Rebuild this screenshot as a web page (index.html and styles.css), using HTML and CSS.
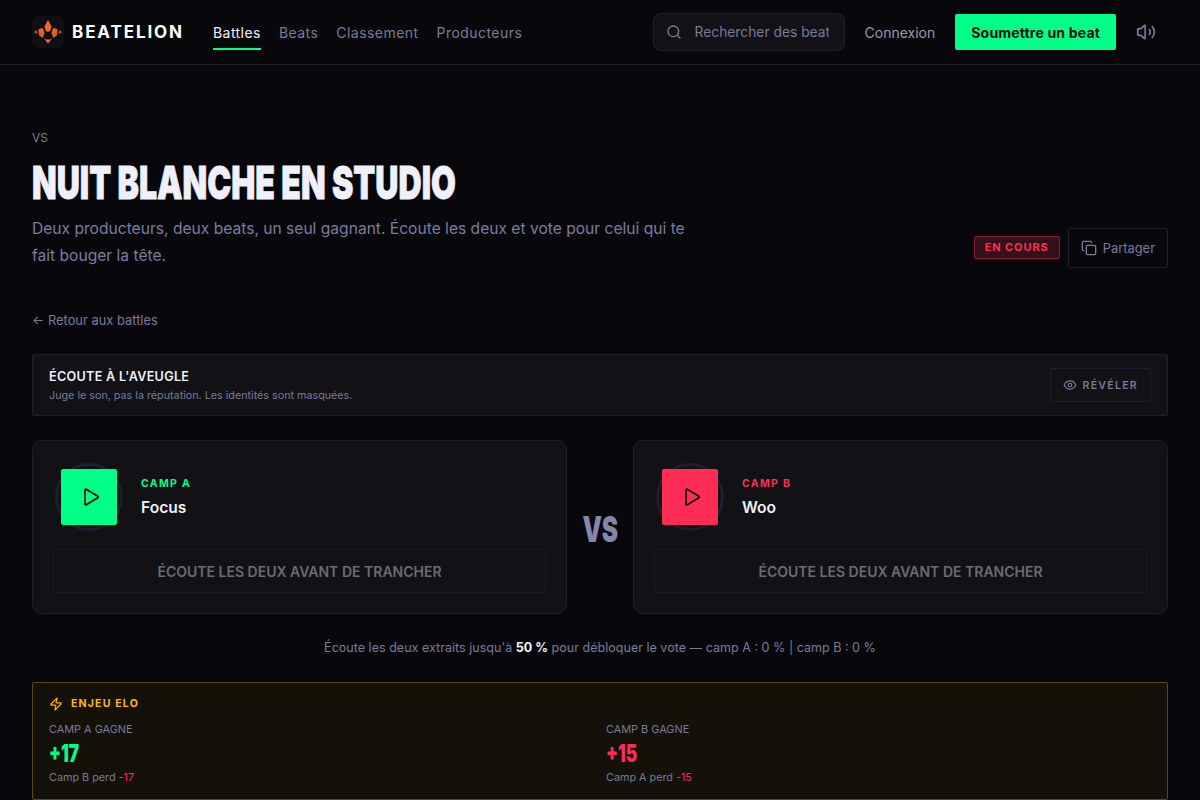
FILE: index.html

```html
<!DOCTYPE html>
<html lang="fr">
<head>
    <meta charset="UTF-8">
    <meta name="viewport" content="width=device-width, initial-scale=1.0">
    <title>Beatelion - Nuit blanche en studio</title>
    <link rel="stylesheet" href="styles.css">
</head>
<body>
    <header class="topbar">
        <div class="topbar-left">
            <a class="brand" href="#">
                <span class="brand-mark">
                    <svg width="32" height="32" viewBox="0 0 32 32">
                        <path d="M16 4l3.500 6.500-1.500 5h-4l-1.500-5z" fill="#f4672b"/>
                        <path d="M6.500 13l4.500-1 1.500 5.500-2 4.500-3.500-3z" fill="#e8602a"/>
                        <path d="M25.500 13l-4.500-1-1.500 5.500 2 4.500 3.500-3z" fill="#e8602a"/>
                        <path d="M12 22.500l2.500 1h3l2.500-1-4 5z" fill="#f4672b"/>
                        <circle cx="4" cy="16" r="1.800" fill="#a04a22"/>
                        <circle cx="28" cy="16" r="1.800" fill="#a04a22"/>
                    </svg>
                </span>
                <span class="brand-name">BEATELION</span>
            </a>
            <nav class="nav">
                <a class="nav-link active" href="#">Battles</a>
                <a class="nav-link" href="#">Beats</a>
                <a class="nav-link" href="#">Classement</a>
                <a class="nav-link" href="#">Producteurs</a>
            </nav>
        </div>
        <div class="topbar-right">
            <label class="search">
                <svg width="16" height="16" viewBox="0 0 24 24" fill="none" stroke="currentColor" stroke-width="2" stroke-linecap="round" stroke-linejoin="round"><circle cx="11" cy="11" r="8"/><path d="m21 21-4.300-4.300"/></svg>
                <input type="text" placeholder="Rechercher des beats...">
            </label>
            <a class="login" href="#">Connexion</a>
            <a class="submit" href="#">Soumettre un beat</a>
            <svg class="sound" width="20" height="20" viewBox="0 0 24 24" fill="none" stroke="currentColor" stroke-width="2" stroke-linecap="round" stroke-linejoin="round"><path d="M11 4.700a.7.7 0 0 0-1.200-.5L6.400 7.600A1.400 1.400 0 0 1 5.400 8H3a1 1 0 0 0-1 1v6a1 1 0 0 0 1 1h2.400a1.400 1.400 0 0 1 1 .4l3.400 3.400a.7.7 0 0 0 1.200-.5z"/><path d="M16 9a5 5 0 0 1 0 6"/><path d="M19.400 18.400a9 9 0 0 0 0-12.800"/></svg>
        </div>
    </header>

    <main class="page">
        <section class="hero">
            <div class="hero-text">
                <p class="eyebrow">VS</p>
                <h1 class="title">NUIT BLANCHE EN STUDIO</h1>
                <p class="lead">Deux producteurs, deux beats, un seul gagnant. Écoute les deux et vote pour celui qui te fait bouger la tête.</p>
            </div>
            <div class="hero-actions">
                <span class="status">EN COURS</span>
                <button class="share">
                    <svg width="16" height="16" viewBox="0 0 24 24" fill="none" stroke="currentColor" stroke-width="2" stroke-linecap="round" stroke-linejoin="round"><rect x="8" y="8" width="14" height="14" rx="2"/><path d="M4 16c-1.100 0-2-.9-2-2V4c0-1.100.9-2 2-2h10c1.100 0 2 .9 2 2"/></svg>
                    Partager
                </button>
            </div>
        </section>

        <a class="back" href="#">← Retour aux battles</a>

        <section class="blind">
            <div class="blind-text">
                <h2 class="blind-title">ÉCOUTE À L'AVEUGLE</h2>
                <p class="blind-sub">Juge le son, pas la réputation. Les identités sont masquées.</p>
            </div>
            <button class="reveal">
                <svg width="14" height="14" viewBox="0 0 24 24" fill="none" stroke="currentColor" stroke-width="2" stroke-linecap="round" stroke-linejoin="round"><path d="M2 12s3.600-7 10-7 10 7 10 7-3.600 7-10 7-10-7-10-7z"/><circle cx="12" cy="12" r="3"/></svg>
                RÉVÉLER
            </button>
        </section>

        <section class="duel">
            <article class="camp">
                <div class="camp-head">
                    <div class="player">
                        <span class="ring"></span>
                        <button class="play play-a">
                            <svg width="20" height="20" viewBox="0 0 24 24" fill="none" stroke="currentColor" stroke-width="2" stroke-linecap="round" stroke-linejoin="round"><path d="M6 3.500v17a1 1 0 0 0 1.500.8l14-8.500a1 1 0 0 0 0-1.600l-14-8.500A1 1 0 0 0 6 3.500z"/></svg>
                        </button>
                    </div>
                    <div>
                        <p class="camp-label label-a">CAMP A</p>
                        <p class="camp-name">Focus</p>
                    </div>
                </div>
                <div class="locked">ÉCOUTE LES DEUX AVANT DE TRANCHER</div>
            </article>

            <div class="versus"><span class="versus-text">VS</span></div>

            <article class="camp">
                <div class="camp-head">
                    <div class="player">
                        <span class="ring"></span>
                        <button class="play play-b">
                            <svg width="20" height="20" viewBox="0 0 24 24" fill="none" stroke="currentColor" stroke-width="2" stroke-linecap="round" stroke-linejoin="round"><path d="M6 3.500v17a1 1 0 0 0 1.500.8l14-8.500a1 1 0 0 0 0-1.600l-14-8.500A1 1 0 0 0 6 3.500z"/></svg>
                        </button>
                    </div>
                    <div>
                        <p class="camp-label label-b">CAMP B</p>
                        <p class="camp-name">Woo</p>
                    </div>
                </div>
                <div class="locked">ÉCOUTE LES DEUX AVANT DE TRANCHER</div>
            </article>
        </section>

        <p class="hint">Écoute les deux extraits jusqu'à <strong>50 %</strong> pour débloquer le vote — camp A : 0 % | camp B : 0 %</p>

        <section class="elo">
            <h3 class="elo-title">
                <svg width="14" height="14" viewBox="0 0 24 24" fill="none" stroke="currentColor" stroke-width="2" stroke-linecap="round" stroke-linejoin="round"><path d="M4 14a1 1 0 0 1-.8-1.600l9.900-10.200a.5.5 0 0 1 .9.500l-1.900 6A1 1 0 0 0 13 10h7a1 1 0 0 1 .8 1.600l-9.900 10.200a.5.5 0 0 1-.9-.5l1.900-6A1 1 0 0 0 11 14z"/></svg>
                ENJEU ELO
            </h3>
            <div class="elo-grid">
                <div>
                    <p class="elo-label">CAMP A GAGNE</p>
                    <p class="elo-value value-a">+17</p>
                    <p class="elo-note">Camp B perd <span class="minus">-17</span></p>
                </div>
                <div>
                    <p class="elo-label">CAMP B GAGNE</p>
                    <p class="elo-value value-b">+15</p>
                    <p class="elo-note">Camp A perd <span class="minus">-15</span></p>
                </div>
            </div>
        </section>
    </main>
</body>
</html>
```

FILE: styles.css

```css
* {
    box-sizing: border-box;
}

html, body {
    height: 800px;
    overflow: hidden;
}

body {
    margin: 0;
    background-color: #08080c;
    color: #f0f0fa;
    font-family: "Inter", "Liberation Sans", sans-serif;
}

p, h1, h2, h3 {
    margin: 0;
}

a {
    color: inherit;
    text-decoration: none;
}

button {
    font-family: inherit;
    cursor: pointer;
}

.topbar {
    height: 65px;
    padding: 0 44px 0 32px;
    display: flex;
    justify-content: space-between;
    align-items: center;
    border-bottom: 1px solid #1e1e2e;
}

.topbar-left, .topbar-right {
    display: flex;
    align-items: center;
}

.brand {
    display: flex;
    align-items: center;
    gap: 8px;
    margin-right: 29px;
}

.brand-mark {
    width: 32px;
    height: 32px;
    display: flex;
    align-items: center;
    justify-content: center;
    background: #101014;
    border-radius: 8px;
}

.brand-name {
    font-size: 17px;
    font-weight: 700;
    letter-spacing: 1.900px;
    color: #fff;
}

.nav {
    display: flex;
    gap: 18px;
}

.nav-link {
    height: 64px;
    display: flex;
    align-items: center;
    font-size: 14px;
    letter-spacing: 0.45px;
    color: #7a7a9a;
    position: relative;
}

.nav-link.active {
    color: #f0f0fa;
}

.nav-link.active::after {
    content: "";
    position: absolute;
    left: 0;
    right: 0;
    bottom: 14px;
    height: 2px;
    background: #00ff87;
}

.search {
    width: 192px;
    height: 38px;
    display: flex;
    align-items: center;
    gap: 13px;
    padding: 0 15px 0 12px;
    margin-right: 20px;
    background: #111116;
    border: 1px solid #1e1e2e;
    border-radius: 8px;
    color: #7a7a9a;
}

.search svg {
    flex: none;
}

.search input {
    width: 100%;
    min-width: 0;
    padding: 0;
    border: none;
    outline: none;
    background: none;
    font-family: inherit;
    font-size: 13.800px;
    color: #f0f0fa;
}

.search input::placeholder {
    color: #7a7a9a;
    opacity: 1;
}

.login {
    font-size: 14px;
    color: #9a9aa8;
    margin-right: 20px;
}

.submit {
    height: 36px;
    padding: 0 16px;
    display: flex;
    align-items: center;
    background: #00ff87;
    color: #0a0a0f;
    font-size: 14px;
    font-weight: 700;
    letter-spacing: 0.18px;
    border-radius: 2px;
    margin-right: 20px;
}

.sound {
    color: #7a7a9a;
}

.page {
    padding: 65px 32px 0;
}

.hero {
    display: flex;
    justify-content: space-between;
    align-items: flex-end;
}

.hero-text {
    max-width: 672px;
}

.eyebrow {
    font-size: 12px;
    line-height: 16px;
    color: #7a7a9a;
    margin-bottom: 11px;
}

/* no condensed display font here, so the heavy cut is squeezed */
.title {
    font-size: 46px;
    line-height: 50px;
    font-weight: 900;
    white-space: nowrap;
    color: #f0f0fa;
    -webkit-text-stroke: 0.8px #f0f0fa;
    transform: scaleX(0.697);
    transform-origin: left center;
    margin-bottom: 8px;
}

.lead {
    font-size: 15.6px;
    line-height: 27px;
    color: #7c7c9e;
}

.hero-actions {
    display: flex;
    align-items: center;
    gap: 8px;
    margin-bottom: 1px;
}

.status {
    height: 23px;
    padding: 0 10px;
    margin-bottom: 2px;
    display: flex;
    align-items: center;
    font-size: 11px;
    font-weight: 700;
    letter-spacing: 0.9px;
    color: #ff2d55;
    background: #33101a;
    border: 1px solid #8a1c34;
    border-radius: 2px;
}

.share {
    height: 40px;
    padding: 0 12px;
    display: flex;
    align-items: center;
    gap: 6px;
    background: none;
    border: 1px solid #1e1e2e;
    border-radius: 2px;
    color: #7a7a9a;
    font-size: 12.9px;
}

.back {
    display: block;
    margin-top: 42px;
    font-size: 12.9px;
    line-height: 20px;
    color: #7a7a9a;
}

.blind {
    margin-top: 23px;
    height: 62px;
    padding: 0 16px;
    display: flex;
    justify-content: space-between;
    align-items: center;
    background: #111116;
    border: 1px solid #1e1e2e;
    border-radius: 2px;
}

.blind-text {
    padding-top: 2px;
}

.blind-title {
    font-size: 12.6px;
    line-height: 16px;
    font-weight: 600;
    letter-spacing: 0.3px;
    color: #f0f0fa;
}

.blind-sub {
    margin-top: 3px;
    font-size: 10.75px;
    line-height: 15px;
    color: #7a7a9a;
}

.reveal {
    height: 34px;
    padding: 0 12px;
    display: flex;
    align-items: center;
    gap: 6px;
    background: none;
    border: 1px solid #1e1e2e;
    border-radius: 2px;
    color: #7a7a9a;
    font-size: 10.5px;
    font-weight: 600;
    letter-spacing: 1.300px;
}

.duel {
    margin-top: 24px;
    display: grid;
    grid-template-columns: 1fr 66px 1fr;
}

.camp {
    height: 174px;
    padding: 20px;
    background: #111116;
    border: 1px solid #1e1e2e;
    border-radius: 10px;
}

.camp-head {
    display: flex;
    align-items: center;
    gap: 18px;
    padding: 2px 0 0 2px;
    margin-bottom: 18px;
}

.player {
    width: 68px;
    height: 68px;
    display: flex;
    align-items: center;
    justify-content: center;
    position: relative;
}

.ring {
    position: absolute;
    inset: 0;
    border: 3px solid #1e1e2e;
    border-radius: 50%;
}

.play {
    position: relative;
    width: 56px;
    height: 56px;
    display: flex;
    align-items: center;
    justify-content: center;
    border: none;
    border-radius: 2px;
    color: #0a0a0f;
}

.play svg {
    margin-left: 1px;
}

.play-a {
    background: #00ff87;
}

.play-b {
    background: #ff2d55;
}

.camp-label {
    font-size: 10.5px;
    line-height: 16px;
    font-weight: 700;
    letter-spacing: 1.300px;
}

.label-a {
    color: #00ff87;
}

.label-b {
    color: #ff2d55;
}

.camp-name {
    margin-top: 5px;
    font-size: 15.6px;
    line-height: 22px;
    font-weight: 600;
    color: #f0f0fa;
}

.locked {
    height: 44px;
    display: flex;
    align-items: center;
    justify-content: center;
    border: 1px solid #1a1a26;
    border-radius: 2px;
    font-size: 14px;
    font-weight: 600;
    color: #6b6b72;
}

.versus {
    display: flex;
    align-items: center;
    justify-content: center;
    padding-top: 3px;
}

.versus-text {
    font-size: 36px;
    font-weight: 900;
    color: #8686ad;
    transform: scaleX(0.68);
}

.hint {
    margin-top: 24px;
    text-align: center;
    font-size: 12.57px;
    line-height: 20px;
    color: #7a7a9a;
}

.hint strong {
    color: #f0f0fa;
}

.elo {
    margin-top: 24px;
    height: 118px;
    padding: 13px 16px;
    background: #14100a;
    border: 1px solid #5f4a0c;
    border-radius: 2px;
}

.elo-title {
    display: flex;
    align-items: center;
    gap: 8px;
    font-size: 10.5px;
    line-height: 16px;
    font-weight: 700;
    letter-spacing: 1.200px;
    color: #ffb800;
}

.elo-grid {
    display: grid;
    grid-template-columns: 1fr 1fr;
    gap: 12px;
    margin-top: 9px;
}

.elo-label {
    font-size: 10.9px;
    line-height: 16px;
    color: #7a7a9a;
}

.elo-value {
    margin-top: 3px;
    font-size: 24px;
    line-height: 28px;
    font-weight: 900;
    transform: scaleX(0.72);
    transform-origin: left center;
}

.value-a {
    color: #00ff87;
}

.value-b {
    color: #ff2d55;
}

.elo-note {
    margin-top: 2px;
    font-size: 10.8px;
    line-height: 16px;
    color: #7a7a9a;
}

.minus {
    color: #ff2d55;
}
```
